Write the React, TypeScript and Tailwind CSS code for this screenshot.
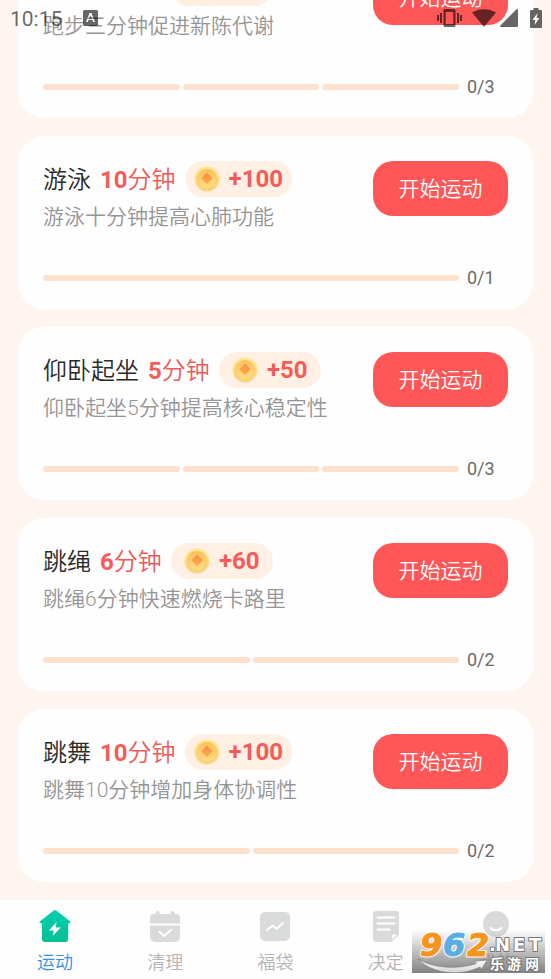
import clsx from "clsx";

type Exercise = {
  name: string;
  minutes: string;
  reward: number;
  description: string;
  total: number;
};

const exercises: Exercise[] = [
  { name: "跑步", minutes: "3", reward: 30, description: "跑步三分钟促进新陈代谢", total: 3 },
  { name: "游泳", minutes: "10", reward: 100, description: "游泳十分钟提高心肺功能", total: 1 },
  { name: "仰卧起坐", minutes: "5", reward: 50, description: "仰卧起坐5分钟提高核心稳定性", total: 3 },
  { name: "跳绳", minutes: "6", reward: 60, description: "跳绳6分钟快速燃烧卡路里", total: 2 },
  { name: "跳舞", minutes: "10", reward: 100, description: "跳舞10分钟增加身体协调性", total: 2 },
];

function Coin() {
  return (
    <svg viewBox="0 0 26 26" className="size-[26px] shrink-0" aria-hidden="true">
      <defs>
        <linearGradient id="coinRim" x1="0" y1="0" x2="0" y2="1">
          <stop offset="0" stopColor="#ffe88c" />
          <stop offset="1" stopColor="#fdd07e" />
        </linearGradient>
        <linearGradient id="coinFace" x1="0" y1="0" x2="0" y2="1">
          <stop offset="0" stopColor="#fdc25f" />
          <stop offset="1" stopColor="#ffdc84" />
        </linearGradient>
        <linearGradient id="coinHole" x1="0" y1="0" x2="0" y2="1">
          <stop offset="0" stopColor="#fb8f3c" />
          <stop offset="1" stopColor="#fdab50" />
        </linearGradient>
      </defs>
      <circle cx="13" cy="13" r="12.4" fill="url(#coinRim)" />
      <circle cx="13" cy="13" r="10" fill="#fabd5c" />
      <circle cx="13" cy="13.4" r="9.4" fill="url(#coinFace)" />
      <path d="M13 6.500 18.700 12.200 13 17.900 7.300 12.200Z" fill="url(#coinHole)" />
    </svg>
  );
}

function ExerciseCard({ name, minutes, reward, description, total }: Exercise) {
  return (
    <li className="shrink-0 rounded-[26px] bg-[#fffefe] px-[25px] pt-[25px] pb-[19px]">
      <div className="flex items-start justify-between">
        <div>
          <div className="flex h-9 items-center">
            <h2 className="flex items-center gap-[9px] pt-0.5 text-2xl leading-9 font-[350] text-[#2b2b2b]">
              {name}
              <span className="text-[#ee5a5a]">
                <b className="font-bold text-[#f55b5b]">{minutes}</b>分钟
              </span>
            </h2>
            <span className="ml-[9px] flex h-9 min-w-[102px] items-center justify-center gap-[9px] rounded-full bg-[#fff0e3] px-[9px] text-2xl font-bold text-[#f55b5b]">
              <Coin />+{reward}
            </span>
          </div>
          <p className="mt-1 text-[21px] leading-8 font-[350] text-[#959595]">{description}</p>
        </div>
        <button
          type="button"
          className="h-[55px] w-[135px] shrink-0 rounded-[20px] bg-[#ff5757] pt-0.5 text-[21px] font-[350] text-white"
        >
          开始运动
        </button>
      </div>
      <div className="mt-[33px] flex items-center gap-2">
        <div className="flex flex-1 gap-[3px]">
          {Array.from({ length: total }, (_, i) => (
            <span key={i} className="h-1.5 flex-1 rounded-full bg-[#fee1cd]" />
          ))}
        </div>
        <span className="w-[41px] text-lg leading-6 text-[#6b6b6b]">0/{total}</span>
      </div>
    </li>
  );
}

function StatusBar() {
  return (
    <header className="absolute inset-x-0 top-0 z-10 flex h-9 items-center pr-[9px] pl-2.5 text-black/60">
      <span className="pt-0.5 text-[21px] leading-9">10:15</span>
      <svg viewBox="0 0 15 16" className="ml-[21px] h-4 w-[15px]" fill="currentColor" aria-hidden="true">
        <path
          fillRule="evenodd"
          d="M1.500 0h12A1.500 1.500 0 0 1 15 1.500v13a1.500 1.500 0 0 1-1.500 1.500h-12A1.500 1.500 0 0 1 0 14.500v-13A1.500 1.500 0 0 1 1.500 0ZM6.600 3 3 12h1.800l.8-2.200h3.800l.8 2.200H12L8.400 3ZM7.500 5.200 8.900 8.400H6.100Z"
        />
      </svg>
      <svg viewBox="0 0 25 20" className="ml-auto h-5 w-[25px]" fill="currentColor" aria-hidden="true">
        <path d="M0 7h2v6H0zM3 5h2v10H3zM20 5h2v10h-2zM23 7h2v6h-2z" />
        <path fillRule="evenodd" d="M8 1h9a1.500 1.500 0 0 1 1.500 1.500v15A1.500 1.500 0 0 1 17 19H8a1.500 1.500 0 0 1-1.500-1.500v-15A1.500 1.500 0 0 1 8 1Zm.700 3v12h7.600V4Z" />
      </svg>
      <svg viewBox="0 0 24 20" className="ml-2.5 h-5 w-6" fill="currentColor" aria-hidden="true">
        <path d="M12 19 0 4.500C7 0 17 0 24 4.500Z" />
      </svg>
      <svg viewBox="0 0 18 18" className="ml-1 size-[18px]" fill="currentColor" aria-hidden="true">
        <path d="M17 0a1 1 0 0 1 1 1v16a1 1 0 0 1-1 1H1c-1 0-1.300-1-.600-1.600L16.400.4A1 1 0 0 1 17 0Z" />
      </svg>
      <svg viewBox="0 0 12 20" className="ml-3 h-5 w-3" fill="currentColor" aria-hidden="true">
        <path
          fillRule="evenodd"
          d="M3.500 0h5v2h2.200c.7 0 1.300.6 1.300 1.300v15.400c0 .7-.6 1.300-1.300 1.300H1.300C.6 20 0 19.400 0 18.700V3.300C0 2.600.6 2 1.300 2h2.200ZM7.500 5 2.500 12h2.800L4.500 17 9.500 10H6.700Z"
        />
      </svg>
    </header>
  );
}

function HomeIcon() {
  return (
    <svg viewBox="0 0 34 34" className="size-[34px]" aria-hidden="true">
      <defs>
        <linearGradient id="homeFill" x1="0" y1="0" x2="0" y2="1">
          <stop offset="0" stopColor="#05d0b0" />
          <stop offset="1" stopColor="#05c093" />
        </linearGradient>
      </defs>
      <path
        d="M15.800 1.500a2 2 0 0 1 2.400 0L32 12.200c.9.800.5 2-.6 2H30.200V30a3 3 0 0 1-3 3H7a3 3 0 0 1-3-3V14.200H2.600c-1.100 0-1.500-1.200-.6-2Z"
        fill="url(#homeFill)"
      />
      <path d="m18.500 13-7.600 8.500h4.800L14.800 27l8-8.500h-5Z" fill="#fff" />
    </svg>
  );
}

function CalendarIcon() {
  return (
    <svg viewBox="0 0 34 34" className="size-[34px]" fill="#d9dbda" aria-hidden="true">
      <rect x="7.500" y="2" width="4" height="8" rx="2" />
      <rect x="22.500" y="2" width="4" height="8" rx="2" />
      <path d="M6 5h22a4 4 0 0 1 4 4v5.500H2V9a4 4 0 0 1 4-4ZM2 16.500h30V28a5 5 0 0 1-5 5H7a5 5 0 0 1-5-5Z" />
      <path d="m11.500 22.500 4.500 4.500 7-6" fill="none" stroke="#fff" strokeWidth="2" strokeLinecap="round" strokeLinejoin="round" />
    </svg>
  );
}

function TrendIcon() {
  return (
    <svg viewBox="0 0 34 34" className="size-[34px]" aria-hidden="true">
      <rect x="2" y="3" width="30" height="29" rx="5" fill="#d9dbda" />
      <path d="m9 21 5.500-4.500 4 3.500L25 14" fill="none" stroke="#fff" strokeWidth="2" strokeLinecap="round" strokeLinejoin="round" />
    </svg>
  );
}

function NoteIcon() {
  return (
    <svg viewBox="0 0 34 34" className="size-[34px]" aria-hidden="true">
      <path d="M7 2h20a3 3 0 0 1 3 3v20l-8 8H7a3 3 0 0 1-3-3V5a3 3 0 0 1 3-3Z" fill="#d9dbda" />
      <path d="M8.500 8.500h17M8.500 14.500h17M8.500 20.500h12" stroke="#fff" strokeWidth="2" strokeLinecap="round" />
      <path d="M22.500 32v-5a2 2 0 0 1 2-2h5Z" fill="#fff" stroke="#d9dbda" strokeWidth="1.200" strokeLinejoin="round" />
    </svg>
  );
}

function FaceIcon() {
  return (
    <svg viewBox="0 0 34 34" className="size-[34px]" fill="#d9dbda" aria-hidden="true">
      <circle cx="17" cy="15" r="13" />
      <path d="M11.500 19c3 3 8 3 11 0" fill="none" stroke="#fff" strokeWidth="2" strokeLinecap="round" />
    </svg>
  );
}

const tabs = [
  { label: "运动", icon: HomeIcon, active: true },
  { label: "清理", icon: CalendarIcon },
  { label: "福袋", icon: TrendIcon },
  { label: "决定", icon: NoteIcon },
  { label: "我的", icon: FaceIcon },
];

function Watermark() {
  return (
    <div className="absolute right-1.5 bottom-1.5 h-[43px] w-[133px] bg-linear-to-b from-white/0 to-[#828282]">
      <svg viewBox="0 0 133 43" className="size-full" role="img" aria-label="962.NET 乐游网">
        <defs>
          <linearGradient id="swoosh" x1="0" y1="0" x2="0" y2="1">
            <stop offset="0" stopColor="#ffffff" />
            <stop offset="1" stopColor="#d4d4d4" />
          </linearGradient>
        </defs>
        <path
          d="M6 29C20 44 48 47 68 37l1.500 2.500L75 30 62 31.500l2.500 2C46 40 20 38 6 29Z"
          fill="url(#swoosh)"
          stroke="#777"
          strokeWidth="0.600"
        />
        <g className="font-['DejaVu_Sans'] text-[32px] font-bold italic">
          <g fill="#fff" stroke="#fff" strokeWidth="3" strokeLinejoin="round">
            <text x="8" y="26">9</text>
            <text x="31" y="26">6</text>
            <text x="55" y="26">2</text>
          </g>
          <g strokeWidth="1" strokeLinejoin="round">
            <text x="8" y="26" fill="#f7941e" stroke="#f7941e">9</text>
            <text x="31" y="26" fill="#5aaee4" stroke="#5aaee4">6</text>
            <text x="55" y="26" fill="#f7941e" stroke="#f7941e">2</text>
          </g>
        </g>
        <g fill="#fff" stroke="#777" strokeWidth="2" strokeLinejoin="round" paintOrder="stroke">
          <g className="font-['DejaVu_Sans'] text-[18px] font-bold">
            <text x="77" y="21">.</text>
            <text x="83" y="21">N</text>
            <text x="101" y="21">E</text>
            <text x="117" y="21">T</text>
          </g>
          <g className="font-['Noto_Sans_CJK_SC'] text-[14px] font-bold">
            <text x="78" y="39">乐</text>
            <text x="95" y="39">游</text>
            <text x="113" y="39">网</text>
          </g>
        </g>
      </svg>
    </div>
  );
}

export default function App() {
  return (
    <div className="relative flex h-screen flex-col overflow-hidden bg-[#fff5f0] font-[Roboto,'Noto_Sans_CJK_SC',sans-serif]">
      <StatusBar />
      <main className="flex min-h-0 flex-1 flex-col justify-end overflow-hidden">
        <ul className="flex shrink-0 flex-col gap-[18px] px-[18px] pb-[18px]">
          {exercises.map((exercise) => (
            <ExerciseCard key={exercise.name} {...exercise} />
          ))}
        </ul>
      </main>
      <nav className="grid h-[79px] shrink-0 grid-cols-5 bg-[#fffefe] pt-[9px]">
        {tabs.map(({ label, icon: Icon, active }) => (
          <a
            key={label}
            href="#"
            className={clsx(
              "flex flex-col items-center gap-1 text-lg leading-8 font-[350]",
              active ? "text-[#338fe8]" : "text-[#b4b4b4]",
            )}
          >
            <Icon />
            {label}
          </a>
        ))}
      </nav>
      <Watermark />
    </div>
  );
}
